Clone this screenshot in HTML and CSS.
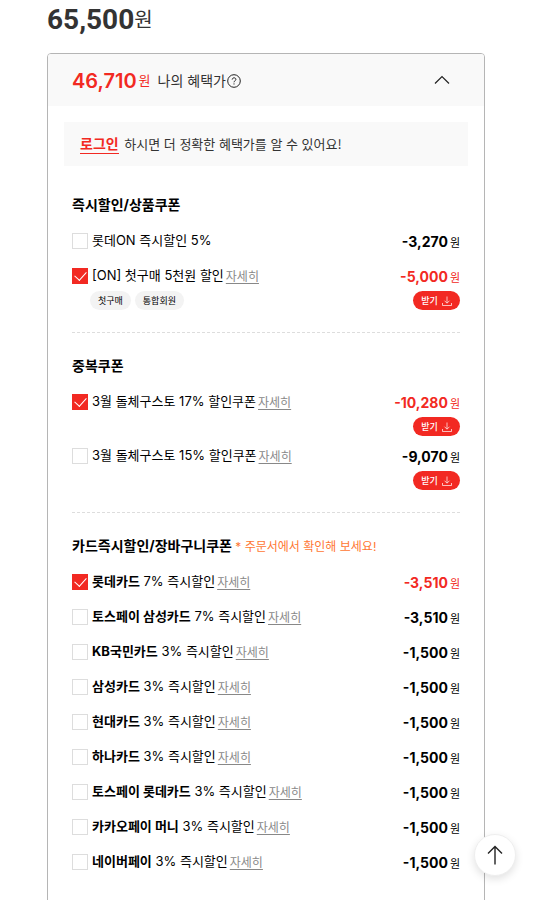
FILE: index.html
```html
<!DOCTYPE html>
<html lang="ko">
<head>
  <meta charset="UTF-8" />
  <title>나의 혜택가</title>
  <meta name="viewport" content="width=device-width, initial-scale=1" />
  <link rel="stylesheet" href="styles.css">
</head>
<body>

  <!-- download icon shared by the coupon buttons -->
  <svg class="sprite" aria-hidden="true">
    <symbol id="download" viewBox="0 0 10 10">
      <path d="M5 0.5V7M2.5 4.7L5 7.2L7.5 4.7M0.5 7V9.5H9.5V7" fill="none" stroke="currentColor" stroke-width="0.7" />
    </symbol>
  </svg>

  <main>
    <p class="sale-price"><strong>65,500</strong>원</p>

    <div class="benefit">
      <div class="benefit-head">
        <p class="my-price"><strong>46,710</strong><span>원</span></p>
        <span class="my-label">나의 혜택가</span>
        <button class="help" aria-label="혜택가 안내">
          <svg viewBox="0 0 14 14" width="14" height="14">
            <circle cx="7" cy="7" r="6.3" fill="none" stroke="#222" />
            <path d="M5.2 5.6C5.2 3.2 8.9 3.3 8.9 5.4C8.9 6.8 7 6.7 7 8.3M7 9.4V10.5" fill="none" stroke="#222" />
          </svg>
        </button>
        <button class="toggle" aria-label="접기">
          <svg viewBox="0 0 16 10" width="16" height="10">
            <path d="M1 8.5L8 1.5L15 8.5" fill="none" stroke="#222" stroke-width="1.2" />
          </svg>
        </button>
      </div>

      <p class="notice"><a href="#">로그인</a> 하시면 더 정확한 혜택가를 알 수 있어요!</p>

      <section>
        <h3>즉시할인/상품쿠폰</h3>
        <ul>
          <li>
            <div class="row">
              <input type="checkbox" id="c1"><label for="c1">롯데ON 즉시할인 5%</label>
              <span class="amount"><b>-3,270</b>원</span>
            </div>
          </li>
          <li>
            <div class="row">
              <input type="checkbox" id="c2" checked><label for="c2">[ON] 첫구매 5천원 할인</label>
              <a href="#" class="detail">자세히</a>
              <span class="amount"><b>-5,000</b>원</span>
            </div>
            <div class="sub-row">
              <span class="chip">첫구매</span>
              <span class="chip">통합회원</span>
              <button class="get">받기 <svg width="10" height="10"><use href="#download" /></svg></button>
            </div>
          </li>
        </ul>
      </section>

      <section>
        <h3>중복쿠폰</h3>
        <ul>
          <li>
            <div class="row">
              <input type="checkbox" id="c3" checked><label for="c3">3월 돌체구스토 17% 할인쿠폰</label>
              <a href="#" class="detail">자세히</a>
              <span class="amount"><b>-10,280</b>원</span>
            </div>
            <div class="sub-row">
              <button class="get">받기 <svg width="10" height="10"><use href="#download" /></svg></button>
            </div>
          </li>
          <li>
            <div class="row">
              <input type="checkbox" id="c4"><label for="c4">3월 돌체구스토 15% 할인쿠폰</label>
              <a href="#" class="detail">자세히</a>
              <span class="amount"><b>-9,070</b>원</span>
            </div>
            <div class="sub-row">
              <button class="get">받기 <svg width="10" height="10"><use href="#download" /></svg></button>
            </div>
          </li>
        </ul>
      </section>

      <section>
        <h3>카드즉시할인/장바구니쿠폰 <small>* 주문서에서 확인해 보세요!</small></h3>
        <ul>
          <li>
            <div class="row">
              <input type="checkbox" id="c5" checked><label for="c5"><b>롯데카드</b> 7% 즉시할인</label>
              <a href="#" class="detail">자세히</a>
              <span class="amount"><b>-3,510</b>원</span>
            </div>
          </li>
          <li>
            <div class="row">
              <input type="checkbox" id="c6"><label for="c6"><b>토스페이 삼성카드</b> 7% 즉시할인</label>
              <a href="#" class="detail">자세히</a>
              <span class="amount"><b>-3,510</b>원</span>
            </div>
          </li>
          <li>
            <div class="row">
              <input type="checkbox" id="c7"><label for="c7"><b>KB국민카드</b> 3% 즉시할인</label>
              <a href="#" class="detail">자세히</a>
              <span class="amount"><b>-1,500</b>원</span>
            </div>
          </li>
          <li>
            <div class="row">
              <input type="checkbox" id="c8"><label for="c8"><b>삼성카드</b> 3% 즉시할인</label>
              <a href="#" class="detail">자세히</a>
              <span class="amount"><b>-1,500</b>원</span>
            </div>
          </li>
          <li>
            <div class="row">
              <input type="checkbox" id="c9"><label for="c9"><b>현대카드</b> 3% 즉시할인</label>
              <a href="#" class="detail">자세히</a>
              <span class="amount"><b>-1,500</b>원</span>
            </div>
          </li>
          <li>
            <div class="row">
              <input type="checkbox" id="c10"><label for="c10"><b>하나카드</b> 3% 즉시할인</label>
              <a href="#" class="detail">자세히</a>
              <span class="amount"><b>-1,500</b>원</span>
            </div>
          </li>
          <li>
            <div class="row">
              <input type="checkbox" id="c11"><label for="c11"><b>토스페이 롯데카드</b> 3% 즉시할인</label>
              <a href="#" class="detail">자세히</a>
              <span class="amount"><b>-1,500</b>원</span>
            </div>
          </li>
          <li>
            <div class="row">
              <input type="checkbox" id="c12"><label for="c12"><b>카카오페이 머니</b> 3% 즉시할인</label>
              <a href="#" class="detail">자세히</a>
              <span class="amount"><b>-1,500</b>원</span>
            </div>
          </li>
          <li>
            <div class="row">
              <input type="checkbox" id="c13"><label for="c13"><b>네이버페이</b> 3% 즉시할인</label>
              <a href="#" class="detail">자세히</a>
              <span class="amount"><b>-1,500</b>원</span>
            </div>
          </li>
        </ul>
      </section>
    </div>
  </main>

  <button class="to-top" aria-label="맨 위로">
    <svg viewBox="0 0 16 20" width="16" height="20">
      <path d="M8 19.5V1.5M1 8.5L8 1.5L15 8.5" fill="none" stroke="#222" stroke-width="1.4" />
    </svg>
  </button>

</body>
</html>
```
FILE: styles.css
```css
* {
  box-sizing: border-box;
}

body {
  margin: 0;
  font-family: "Noto Sans CJK KR", sans-serif;
  font-size: 13px;
  line-height: 20px;
  color: #000;
  background: #fff;
}

p, h3, ul {
  margin: 0;
  padding: 0;
}

ul {
  list-style: none;
}

button {
  padding: 0;
  border: none;
  background: none;
  font-family: inherit;
  cursor: pointer;
}

svg {
  display: block;
}

.sprite {
  display: none;
}

main {
  padding: 0 61px 0 47px;
}

.sale-price {
  display: flex;
  align-items: center;
  height: 38px;
  font-size: 20px;
  color: #333;
}

.sale-price strong {
  padding-top: 2px;
  font-family: Roboto, sans-serif;
  font-size: 28px;
}

.benefit {
  margin-top: 15px;
  padding-bottom: 40px;
  border: 1px solid #b5b5b5;
  border-radius: 4px;
  overflow: hidden;
}

.benefit-head {
  display: flex;
  align-items: center;
  height: 52px;
  padding: 0 34px 0 24px;
  background: #f9f9f9;
}

.my-price {
  display: flex;
  align-items: center;
  gap: 2px;
  color: #f22922;
}

.my-price strong {
  padding-top: 2px;
  font-family: Inter, sans-serif;
  font-size: 20px;
  font-weight: 600;
}

.my-label {
  margin: 0 1px 0 7px;
  font-size: 14px;
  color: #333;
}

.help {
  padding-top: 2px;
}

.toggle {
  margin-left: auto;
}

.notice {
  margin: 16px 16px 29px;
  padding: 12px 16px;
  background: #f9f9f9;
  color: #333;
}

.notice a {
  margin-right: 2px;
  border-bottom: 1px solid #f22922;
  font-size: 14px;
  font-weight: 700;
  line-height: 16px;
  color: #f22922;
  text-decoration: none;
}

section {
  margin: 0 24px;
}

section + section {
  margin-top: 22px;
  padding-top: 23px;
  border-top: 1px dashed #ddd;
}

h3 {
  height: 20px;
  margin-bottom: 16px;
  font-family: Inter, "Noto Sans CJK KR", sans-serif;
  font-size: 14px;
}

h3 small {
  font-size: 12px;
  font-weight: 400;
  color: #ff7733;
}

li + li {
  margin-top: 10px;
}

.row {
  display: flex;
  align-items: center;
  gap: 2px;
  height: 25px;
  padding-bottom: 5px;
}

.row input {
  appearance: none;
  display: flex;
  justify-content: center;
  width: 16px;
  height: 16px;
  margin: 0 2px 0 0;
  border: 1px solid #ddd;
  background: #fff;
}

.row input:checked {
  border-color: #f22922;
  background: #f22922;
}

/* tick mark */
.row input:checked::after {
  content: "";
  width: 6px;
  height: 10px;
  border: solid #fff;
  border-width: 0 1px 1px 0;
  transform: rotate(42deg);
}

.row label {
  padding-bottom: 2px;
  font-family: Inter, "Noto Sans CJK KR", sans-serif;
}

.detail {
  font-size: 12px;
  color: #888;
  text-underline-offset: 2px;
}

.amount {
  display: flex;
  align-items: center;
  gap: 2px;
  margin-left: auto;
  padding-top: 2px;
  font-size: 11px;
}

.amount b {
  font-family: Inter, sans-serif;
  font-size: 14px;
}

.row input:checked ~ .amount {
  color: #f22922;
}

.sub-row {
  display: flex;
  gap: 4px;
  padding-left: 18px;
}

.chip {
  height: 19px;
  padding: 0 8px;
  border-radius: 10px;
  background: #f3f3f3;
  font-size: 9px;
  line-height: 19px;
}

.get {
  display: flex;
  align-items: center;
  justify-content: center;
  gap: 4px;
  width: 47px;
  height: 19px;
  margin-left: auto;
  border-radius: 10px;
  background: #f22922;
  font-size: 9px;
  font-weight: 500;
  color: #fff;
}

.to-top {
  position: fixed;
  right: 30px;
  bottom: 24px;
  display: flex;
  align-items: center;
  justify-content: center;
  width: 42px;
  height: 42px;
  border: 1px solid #eee;
  border-radius: 50%;
  background: #fff;
  box-shadow: 0 3px 8px rgba(0, 0, 0, 0.12);
}
```
